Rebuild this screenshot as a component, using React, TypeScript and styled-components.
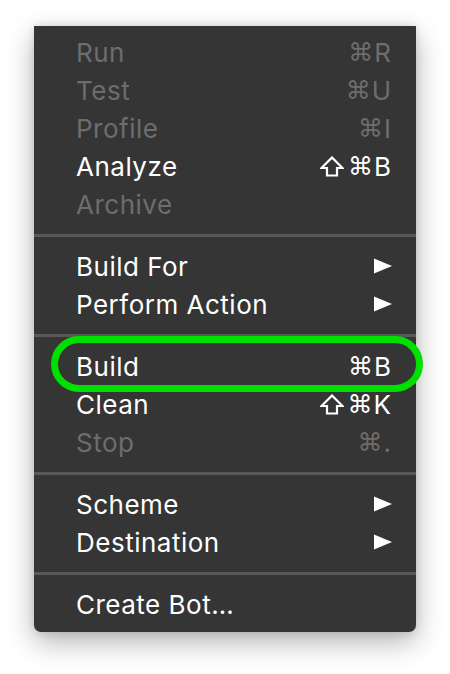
import styled, { createGlobalStyle } from 'styled-components';

type Item =
  | { kind: 'item'; label: string; shortcut?: string; shift?: boolean; disabled?: boolean; submenu?: boolean; marked?: boolean }
  | { kind: 'sep' };

const items: Item[] = [
  { kind: 'item', label: 'Run', shortcut: 'R', disabled: true },
  { kind: 'item', label: 'Test', shortcut: 'U', disabled: true },
  { kind: 'item', label: 'Profile', shortcut: 'I', disabled: true },
  { kind: 'item', label: 'Analyze', shortcut: 'B', shift: true },
  { kind: 'item', label: 'Archive', disabled: true },
  { kind: 'sep' },
  { kind: 'item', label: 'Build For', submenu: true },
  { kind: 'item', label: 'Perform Action', submenu: true },
  { kind: 'sep' },
  { kind: 'item', label: 'Build', shortcut: 'B', marked: true },
  { kind: 'item', label: 'Clean', shortcut: 'K', shift: true },
  { kind: 'item', label: 'Stop', shortcut: '.', disabled: true },
  { kind: 'sep' },
  { kind: 'item', label: 'Scheme', submenu: true },
  { kind: 'item', label: 'Destination', submenu: true },
  { kind: 'sep' },
  { kind: 'item', label: 'Create Bot…' },
];

const GlobalStyle = createGlobalStyle`
  html, body {
    margin: 0;
    background: #ffffff;
  }
  body {
    font-family: Inter, "Liberation Sans", sans-serif;
  }
`;

const Page = styled.div`
  width: 450px;
  height: 674px;
  padding: 26px 0 0 34px;
  box-sizing: border-box;
`;

const Menu = styled.div`
  position: relative;
  width: 382px;
  padding: 7px 0 9px;
  background: #353535;
  border-radius: 0 0 7px 7px;
  box-shadow: 0 10px 28px rgba(0, 0, 0, 0.3), 0 0 8px rgba(0, 0, 0, 0.12);
  box-sizing: border-box;
`;

const Row = styled.div<{ $disabled?: boolean }>`
  position: relative;
  display: flex;
  align-items: center;
  justify-content: space-between;
  height: 38px;
  padding: 0 25px 0 42px;
  font-size: 26px;
  letter-spacing: 0.5px;
  color: ${(p) => (p.$disabled ? '#6d6d6d' : '#ffffff')};
`;

const Shortcut = styled.span`
  display: flex;
  align-items: center;
  letter-spacing: 0;
`;

const Cmd = styled.span`
  font-family: "DejaVu Sans", sans-serif;
  font-size: 25px;
  margin-right: 1px;
`;

const Separator = styled.div`
  height: 3px;
  margin: 11px 0 10px;
  background: #585858;
`;

const Marker = styled.div`
  position: absolute;
  left: 17px;
  right: -7px;
  top: -11px;
  bottom: -7px;
  border: 7px solid #00e000;
  border-radius: 30px;
  pointer-events: none;
`;

const ShiftIcon = () => (
  <svg width="24" height="21" viewBox="0 0 24 21" style={{ marginRight: 4 }}>
    <path d="M12 1.5 L22.5 12 H17 V19.5 H7 V12 H1.5 Z" fill="none" stroke="currentColor" strokeWidth="2.2" strokeLinejoin="miter" />
  </svg>
);

const Arrow = () => (
  <svg width="18" height="16" viewBox="0 0 18 16" style={{ marginRight: -1 }}>
    <path d="M0 0.5 L18 8 L0 15.5 Z" fill="currentColor" />
  </svg>
);

const App = () => (
  <Page>
    <GlobalStyle />
    <Menu>
      {items.map((it, i) =>
        it.kind === 'sep' ? (
          <Separator key={i} />
        ) : (
          <Row key={i} $disabled={it.disabled}>
            <span>{it.label}</span>
            {it.shortcut && (
              <Shortcut>
                {it.shift && <ShiftIcon />}
                <Cmd>⌘</Cmd>
                <span>{it.shortcut}</span>
              </Shortcut>
            )}
            {it.submenu && <Arrow />}
            {it.marked && <Marker />}
          </Row>
        )
      )}
    </Menu>
  </Page>
);

export default App;
